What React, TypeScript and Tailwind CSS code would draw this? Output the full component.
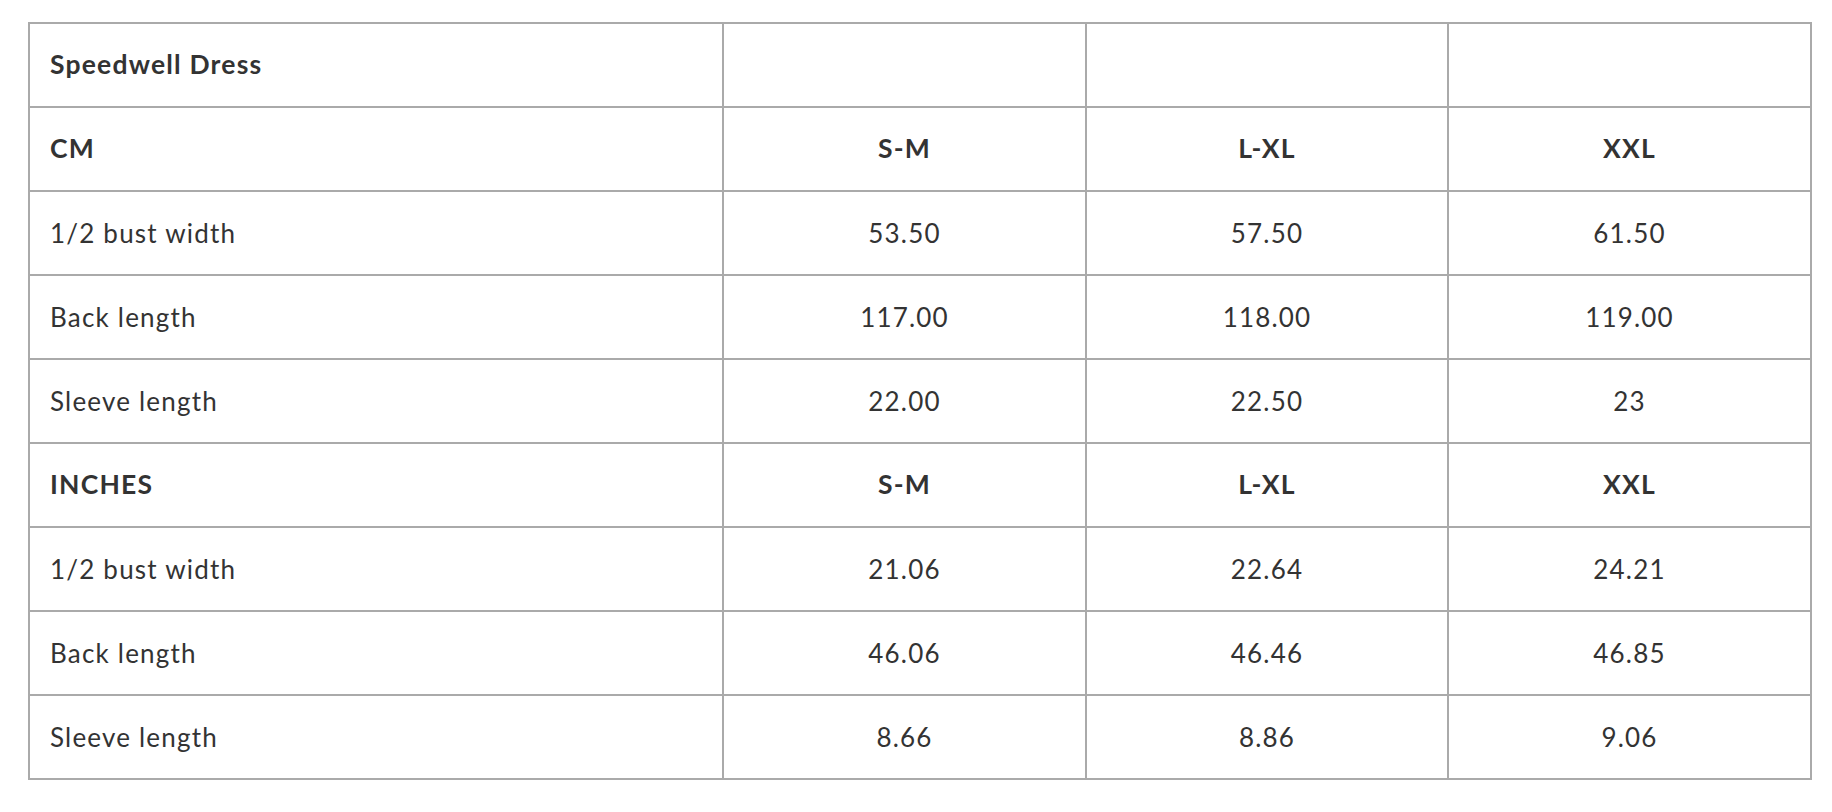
const rows: { cells: string[]; head?: boolean }[] = [
  { cells: ['Speedwell Dress', '', '', ''], head: true },
  { cells: ['CM', 'S-M', 'L-XL', 'XXL'], head: true },
  { cells: ['1/2 bust width', '53.50', '57.50', '61.50'] },
  { cells: ['Back length', '117.00', '118.00', '119.00'] },
  { cells: ['Sleeve length', '22.00', '22.50', '23'] },
  { cells: ['INCHES', 'S-M', 'L-XL', 'XXL'], head: true },
  { cells: ['1/2 bust width', '21.06', '22.64', '24.21'] },
  { cells: ['Back length', '46.06', '46.46', '46.85'] },
  { cells: ['Sleeve length', '8.66', '8.86', '9.06'] },
];

export default function App() {
  return (
    <div className="min-h-screen bg-white pt-[22px] pl-[28px] font-['Lato','Liberation_Sans',sans-serif] text-[#333]">
      <table className="w-[1782px] border-collapse border-2 border-[#aaaaaa] text-[26px] tracking-[1.2px] table-fixed">
        <colgroup>
          <col className="w-[694px]" />
          <col className="w-[363px]" />
          <col className="w-[362px]" />
          <col className="w-[363px]" />
        </colgroup>
        <tbody>
          {rows.map((row, i) => (
            <tr key={i} className="h-[84px]">
              {row.cells.map((c, j) => (
                <td
                  key={j}
                  className={`border-2 border-[#aaaaaa] px-[20px] py-0 ${j === 0 ? 'text-left' : 'text-center'} ${
                    row.head ? 'font-bold text-[26.5px]' : 'font-normal'
                  }`}
                >
                  {c}
                </td>
              ))}
            </tr>
          ))}
        </tbody>
      </table>
    </div>
  );
}
